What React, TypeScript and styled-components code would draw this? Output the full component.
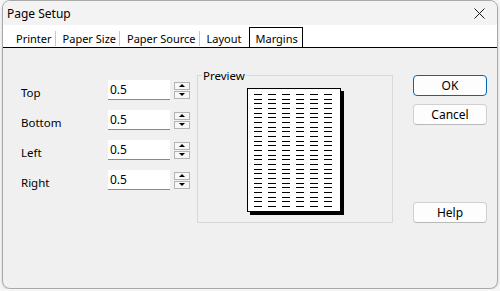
import React from "react";
import styled, { createGlobalStyle } from "styled-components";

const tabs = ["Printer", "Paper Size", "Paper Source", "Layout", "Margins"];
const margins = ["Top", "Bottom", "Left", "Right"];

const GlobalStyle = createGlobalStyle`
    html, body {
        margin: 0;
        padding: 0;
        background: #f6f6f6;
    }
    body {
        font-family: "Segoe UI", "Noto Sans", sans-serif;
        font-size: 11px;
        color: #000;
    }
`;

const PageLines = () => {
    const rows = Array.from({ length: 25 }, (_, i) => Math.round(5 + i * 4.667));
    const cols = [6, 20, 34, 48, 62, 76];
    return (
        <svg width="92" height="122" viewBox="0 0 92 122">
            {rows.map(y =>
                cols.map(x => <rect key={`${x}-${y}`} x={x} y={y} width="8" height="1" fill="#000" />)
            )}
        </svg>
    );
};

const App = () => {
    return (
        <>
            <GlobalStyle />
            <Window>
                <TitleBar>
                    <Title>Page Setup</Title>
                    <Close>
                        <svg width="11" height="11" viewBox="0 0 11 11">
                            <path d="M0.5 0.5 L10.5 10.5 M10.5 0.5 L0.5 10.5" stroke="#1a1a1a" strokeWidth="1" />
                        </svg>
                    </Close>
                </TitleBar>
                <TabStrip>
                    {tabs.map((t, idx) => (
                        <React.Fragment key={t}>
                            <Tab $active={t === "Margins"}>{t}</Tab>
                            {idx < 3 && <TabSep />}
                        </React.Fragment>
                    ))}
                </TabStrip>
                <Body>
                    <Fields>
                        {margins.map(m => (
                            <FieldRow key={m}>
                                <Label>{m}</Label>
                                <Input defaultValue="0.5" />
                                <Spinner>
                                    <SpinBtn><Arrow $up /></SpinBtn>
                                    <SpinBtn><Arrow /></SpinBtn>
                                </Spinner>
                            </FieldRow>
                        ))}
                    </Fields>
                    <PreviewGroup>
                        <Legend>Preview</Legend>
                        <Paper>
                            <PageLines />
                        </Paper>
                    </PreviewGroup>
                    <Buttons>
                        <Button $primary>OK</Button>
                        <Button>Cancel</Button>
                        <Spacer />
                        <Button>Help</Button>
                    </Buttons>
                </Body>
            </Window>
        </>
    );
};

const Window = styled.div`
    box-sizing: border-box;
    margin-left: 2px;
    width: 496px;
    height: 289px;
    border: 1px solid #a9a9a9;
    border-radius: 8px;
    overflow: hidden;
    background: #f0f0f0;
    display: flex;
    flex-direction: column;
    box-shadow: 0 1px 3px rgba(0, 0, 0, 0.15);
`;

const TitleBar = styled.div`
    height: 24px;
    display: flex;
    align-items: center;
    padding-left: 4px;
    background: #f3f3f3;
`;

const Title = styled.span`
    font-size: 12px;
    flex-grow: 1;
    padding-top: 1px;
`;

const Close = styled.div`
    width: 11px;
    height: 11px;
    margin-right: 12px;
    margin-top: 1px;
    display: flex;
`;

const TabStrip = styled.div`
    height: 22px;
    background: #fff;
    border-bottom: 1px solid #000;
    display: flex;
    align-items: stretch;
    padding-left: 6px;
`;

const Tab = styled.div<{ $active?: boolean }>`
    display: flex;
    align-items: center;
    font-size: 11px;
    white-space: nowrap;
    padding: ${p => (p.$active ? "2px 4px 0 5px" : "4px 3px 0 7px")};
    margin-top: ${p => (p.$active ? "2px" : "0")};
    margin-left: ${p => (p.$active ? "5px" : "0")};
    border: ${p => (p.$active ? "1px solid #000" : "none")};
    border-bottom: none;
`;

const TabSep = styled.div`
    width: 1px;
    height: 15px;
    background: #c8c8c8;
    align-self: center;
    margin-top: 4px;
`;

const Body = styled.div`
    flex-grow: 1;
    display: flex;
    align-items: flex-start;
    padding-top: 27px;
`;

const Fields = styled.div`
    display: flex;
    flex-direction: column;
    gap: 10px;
    padding-left: 18px;
    margin-top: 5px;
    width: 167px;
`;

const FieldRow = styled.div`
    display: flex;
    align-items: center;
    height: 20px;
`;

const Label = styled.span`
    flex: 0 0 87px;
    font-size: 11.5px;
    padding-top: 4px;
`;

const Input = styled.input`
    box-sizing: border-box;
    flex: 0 0 62px;
    width: 62px;
    height: 20px;
    border: none;
    border-bottom: 1px solid #8a8a8a;
    background: #fff;
    padding: 0 0 0 2px;
    font-family: inherit;
    font-size: 12px;
    outline: none;
`;

const Spinner = styled.div`
    display: flex;
    flex-direction: column;
    gap: 1px;
    margin-left: 4px;
`;

const SpinBtn = styled.div`
    box-sizing: border-box;
    width: 16px;
    height: 8px;
    border: 1px solid #b4b4b4;
    background: #f7f7f7;
    display: flex;
    align-items: center;
    justify-content: center;
`;

const Arrow = styled.div<{ $up?: boolean }>`
    width: 0;
    height: 0;
    border-left: 3px solid transparent;
    border-right: 3px solid transparent;
    ${p => (p.$up ? "border-bottom: 3px solid #000;" : "border-top: 3px solid #000;")}
`;

const PreviewGroup = styled.fieldset`
    box-sizing: border-box;
    width: 196px;
    height: 155px;
    margin: -7px 0 0 9px;
    padding: 0;
    border: 1px solid #d9d9d9;
    display: flex;
    justify-content: center;
`;

const Legend = styled.legend`
    font-size: 11.5px;
    padding: 0 1px;
    margin-left: 4px;
`;

const Paper = styled.div`
    box-sizing: border-box;
    width: 94px;
    height: 124px;
    margin: 5px 2px 0 0;
    border: 1px solid #000;
    background: #fff;
    box-shadow: 3px 3px 0 #000;
    display: flex;
`;

const Buttons = styled.div`
    display: flex;
    flex-direction: column;
    gap: 8px;
    margin-left: 20px;
    height: 148px;
`;

const Spacer = styled.div`
    flex-grow: 1;
`;

const Button = styled.button<{ $primary?: boolean }>`
    box-sizing: border-box;
    width: 74px;
    height: 21px;
    font-family: inherit;
    font-size: 12px;
    background: #fdfdfd;
    border-radius: 4px;
    border: 1px solid ${p => (p.$primary ? "#0067c0" : "#d0d0d0")};
    border-bottom-color: ${p => (p.$primary ? "#0067c0" : "#b8b8b8")};
    color: #000;
    padding: 0;
`;

export default App;
